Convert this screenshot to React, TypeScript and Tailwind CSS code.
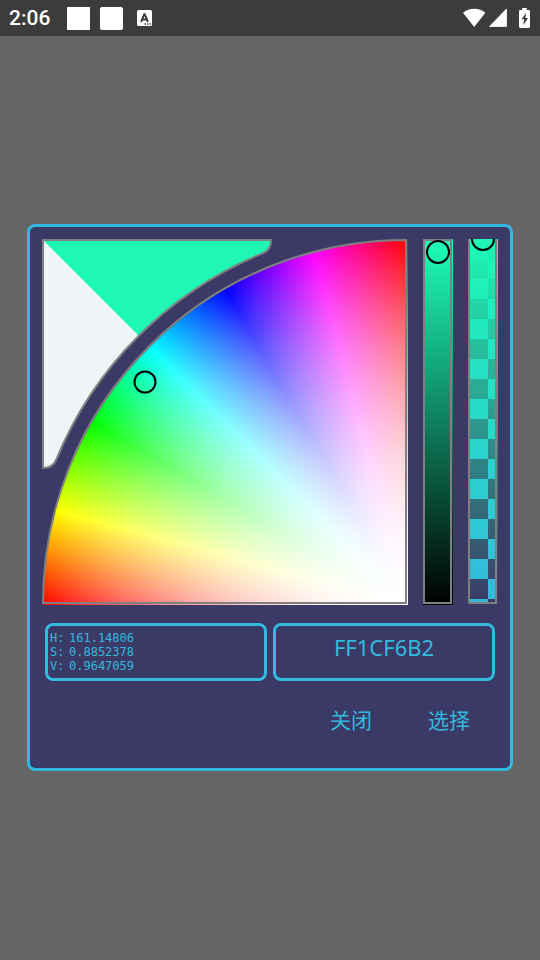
import { useState } from "react"

const hsv = [
  { label: "H", value: "161.14806" },
  { label: "S", value: "0.8852378" },
  { label: "V", value: "0.9647059" },
]

function StatusBar() {
  return (
    <header className="flex h-9 items-center bg-[#3c3c3c] pl-[9px] pr-2.5 text-white">
      <span className="w-[58px] font-[Roboto,sans-serif] text-[21px] font-medium leading-9">2:06</span>
      <span className="size-[23px] bg-white" />
      <span className="ml-2.5 size-[23px] rounded-[2px] bg-white" />
      <svg className="ml-3.5" width="15" height="16" viewBox="0 0 15 16" aria-hidden="true">
        <rect width="15" height="16" rx="1.5" fill="#fff" />
        <path d="M4.1 11.8 7.3 4.2h.4l3.200 7.600M5.400 9.500h4.200" fill="none" stroke="#3c3c3c" strokeWidth="2" />
        <path d="M7.5 14h1.4M10 14h1.400M12.500 14h1.300" stroke="#3c3c3c" strokeWidth="1.3" />
      </svg>
      <div className="ml-auto flex items-center">
        <svg width="23" height="20" viewBox="0 0 23 20" aria-hidden="true">
          <path d="M0 4.8C3 2 7 .7 11.200.7S19.400 2 22.400 4.800L11.200 19Z" fill="#fff" />
        </svg>
        <svg className="ml-[3px]" width="19" height="20" viewBox="0 0 19 20" aria-hidden="true">
          <path d="M17.500 1V18.500H.5Z" fill="#fff" stroke="#fff" strokeWidth=".8" strokeLinejoin="round" />
        </svg>
        <svg className="ml-[11px]" width="11" height="20" viewBox="0 0 11 20" aria-hidden="true">
          <path d="M3.200 0h4.600v2H9.700Q11 2 11 3.300V18.600Q11 20 9.700 20H1.300Q0 20 0 18.600V3.300Q0 2 1.300 2h1.900Z" fill="#fff" />
          <path d="M7.400 4.800 2.500 11.200h2.700L4.200 17.300 9 9.900H6.300Z" fill="#3c3c3c" />
        </svg>
      </div>
    </header>
  )
}

function ColorWheel() {
  return (
    <div className="relative aspect-square min-w-0 flex-1">
      {/* hue by angle, saturation grows with the square of the radius */}
      <div className="size-full p-px pr-0 pb-0">
        <div className="size-full rounded-tl-[100%] bg-[radial-gradient(circle_farthest-side_at_bottom_right,#ffffff_0%,#fffffffc_10%,#fffffff5_20%,#ffffffe8_30%,#ffffffd6_40%,#ffffffbf_50%,#ffffffa3_60%,#ffffff82_70%,#ffffff5c_80%,#ffffff30_90%,#ffffff00_100%),conic-gradient(from_270deg_at_100%_100%,#f00_0deg,#ff0_15deg,#0f0_30deg,#0ff_45deg,#00f_60deg,#f0f_75deg,#f00_90deg)]" />
      </div>
      <svg className="absolute inset-0 size-full" viewBox="0 0 366 366" fill="none" aria-hidden="true">
        <path d="M1 1H229C229 7 226 12 221 14.100A378 378 0 0 0 14.100 221C12 226 7 229 1 229Z" fill="#eff5f6" />
        <path d="M1 1H229C229 7 226 12 221 14.100A378 378 0 0 0 96.700 96.700Z" fill="#1ff7b5" />
        <g stroke="#808080" strokeWidth="2">
          <path d="M1 1H229C229 7 226 12 221 14.100A378 378 0 0 0 14.100 221C12 226 7 229 1 229Z" />
          <path d="M364 364V1A363 363 0 0 0 1 364Z" />
        </g>
        <circle cx="103" cy="143" r="10.500" stroke="#000" strokeWidth="2" />
      </svg>
    </div>
  )
}

function ValueSlider() {
  const [value, setValue] = useState(96)

  return (
    <div className="relative w-[30px] bg-[linear-gradient(#1dffb9,#000)]">
      <div className="absolute inset-0 mr-px mb-px border-2 border-[#808080]" />
      <div className="absolute top-px left-[3px] size-6 rounded-full border-2 border-black" />
      <input
        type="range"
        aria-label="Value"
        className="absolute inset-0 size-full cursor-pointer opacity-0 [writing-mode:vertical-lr] [direction:rtl]"
        value={value}
        onChange={(e) => setValue(Number(e.target.value))}
      />
    </div>
  )
}

function AlphaSlider() {
  const [alpha, setAlpha] = useState(255)

  return (
    <div className="relative w-[30px] overflow-hidden">
      {/* checkerboard under the fading colour */}
      <div className="absolute top-0 bottom-[3px] left-0.5 right-[3px] bg-[repeating-conic-gradient(#3b3a66_0deg_90deg,#33b9dd_90deg_180deg)] bg-size-[36px_40px]" />
      <div className="absolute inset-0 bg-[linear-gradient(#1df8b6,#1df8b600)]" />
      <div className="absolute inset-0 mr-px mb-px border-2 border-t-0 border-[#808080]" />
      <div className="absolute -top-3 left-[3px] size-6 rounded-full border-2 border-black" />
      <input
        type="range"
        aria-label="Alpha"
        max={255}
        className="absolute inset-0 size-full cursor-pointer opacity-0 [writing-mode:vertical-lr] [direction:rtl]"
        value={alpha}
        onChange={(e) => setAlpha(Number(e.target.value))}
      />
    </div>
  )
}

export default function App() {
  const [hex, setHex] = useState("FF1CF6B2")

  return (
    <div className="flex min-h-screen flex-col bg-[#656565] font-['Noto_Sans','Noto_Sans_CJK_SC',sans-serif] text-[#33b9dd]">
      <StatusBar />
      <main className="flex flex-1 items-center justify-center pb-0.5">
        <div role="dialog" aria-label="Color picker" className="w-9/10 rounded-lg border-3 border-[#33b9dd] bg-[#3b3a66] p-3 pb-[15px]">
          <div className="flex gap-[15px]">
            <ColorWheel />
            <ValueSlider />
            <AlphaSlider />
          </div>

          <div className="mx-[3px] mt-[18px] grid h-[58px] grid-cols-2 gap-1.5">
            <dl className="rounded-lg border-3 border-[#33b9dd] pt-[5px] pl-0.5 font-['DejaVu_Sans_Mono',monospace] text-[12px] leading-[14px]">
              {hsv.map((row) => (
                <div key={row.label} className="flex">
                  <dt className="w-[19px]">{row.label}:</dt>
                  <dd>{row.value}</dd>
                </div>
              ))}
            </dl>
            <input
              type="text"
              aria-label="Hex color"
              className="w-full min-w-0 rounded-lg border-3 border-[#33b9dd] bg-transparent pb-2 text-center text-[22px] outline-none"
              value={hex}
              onChange={(e) => setHex(e.target.value)}
            />
          </div>

          {/* Actions */}
          <div className="mt-2 flex justify-end text-[21px]">
            <button type="button" className="h-16 w-[98px]">关闭</button>
            <button type="button" className="h-16 w-[98px]">选择</button>
          </div>
        </div>
      </main>
    </div>
  )
}
